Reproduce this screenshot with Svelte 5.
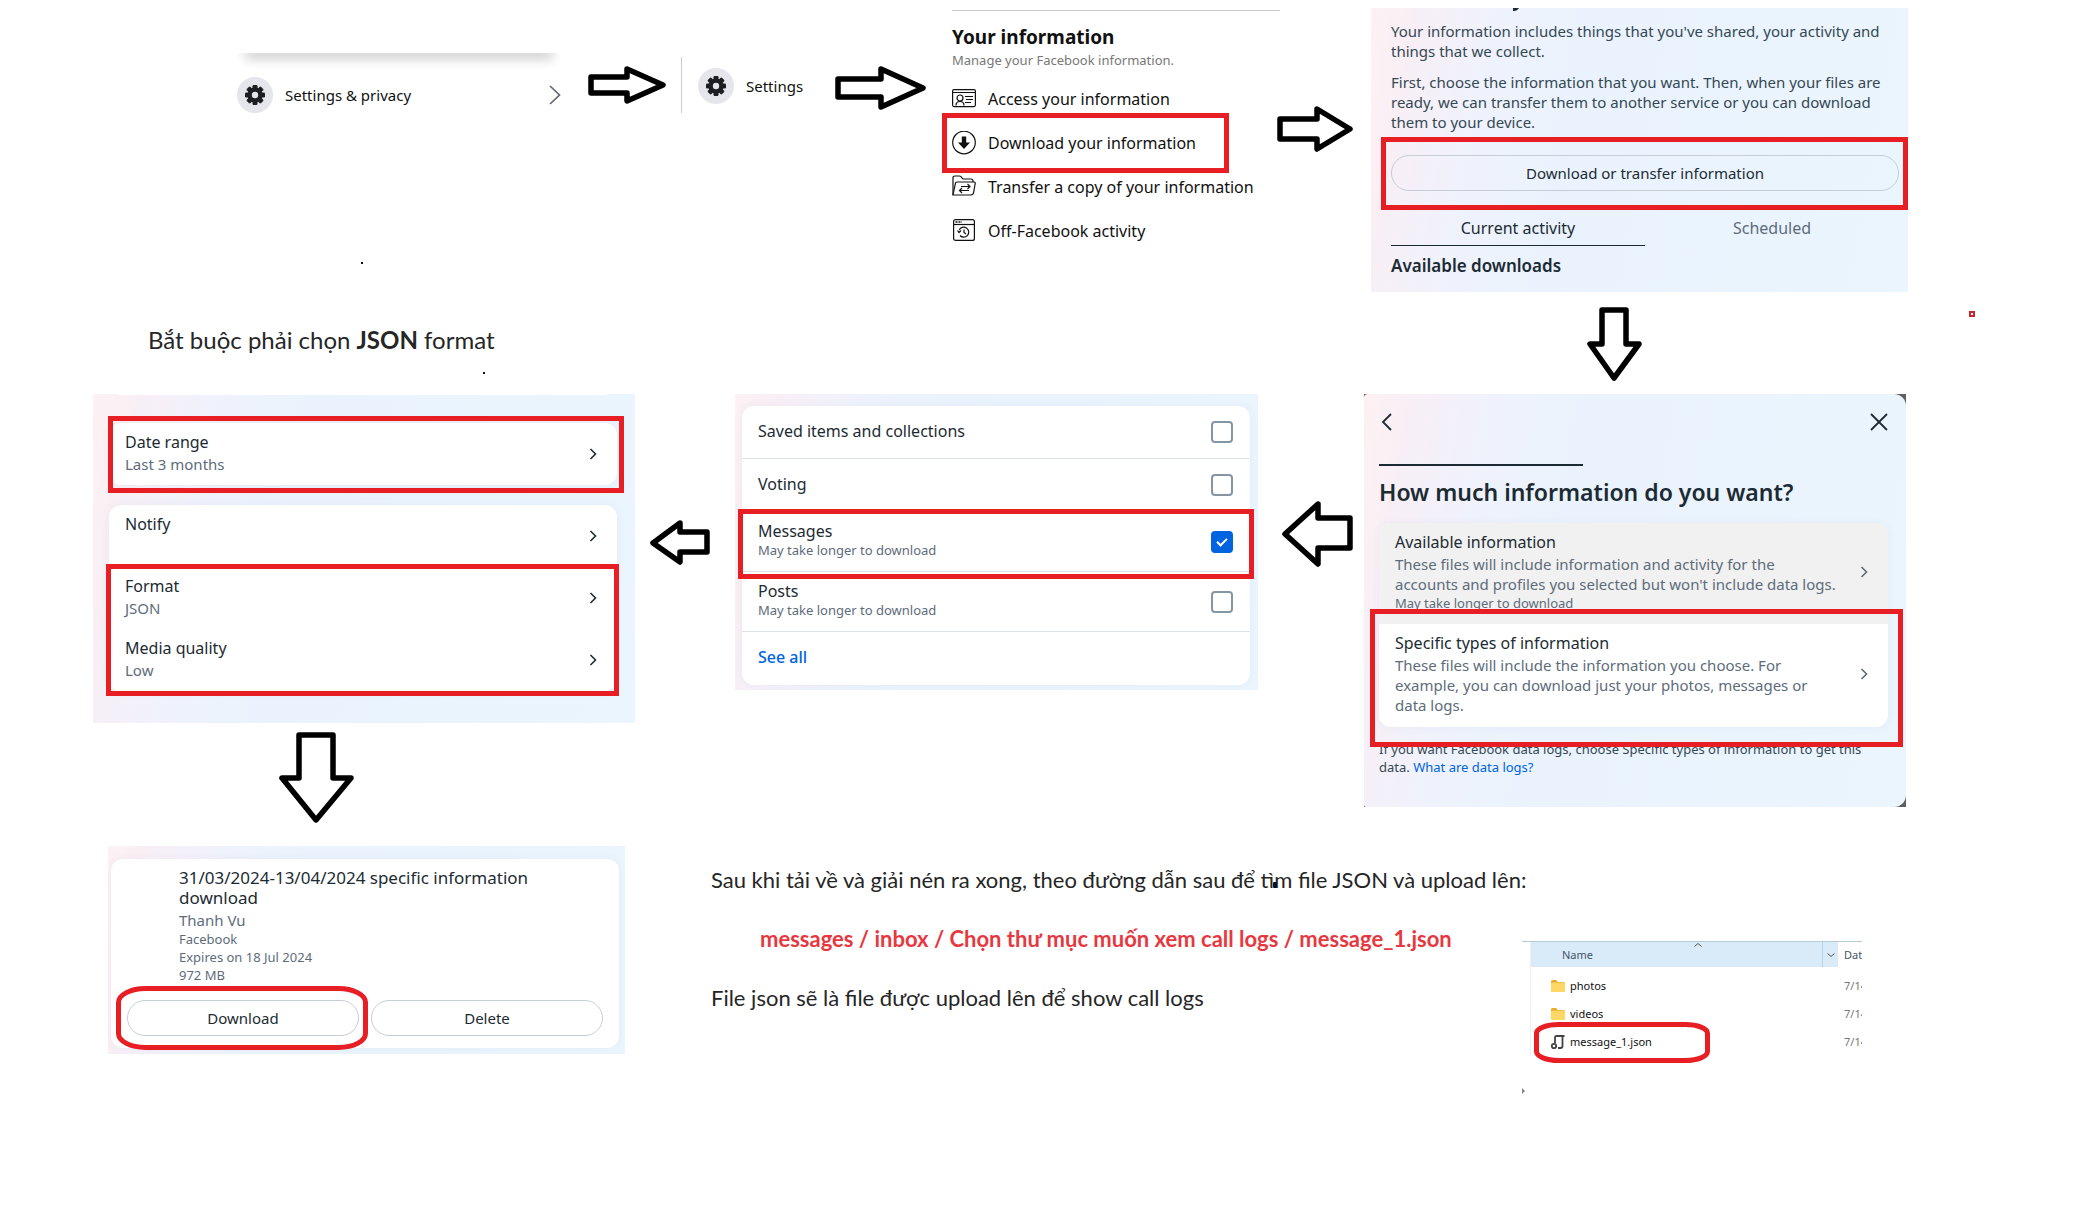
<script>
  const arrows = [
    'M591 77H627V69L663 85L627 101V93H591Z',
    'M838 79H881V69L923 88L881 107V97H838Z',
    'M1280 119H1317V109L1350 129L1317 149V139H1280Z',
    'M1602 310H1626V344H1639L1614 378L1590 344H1602Z',
    'M1350 518H1318V504L1285 534L1318 564V548H1350Z',
    'M707 532H680V523L653 543L680 562V552H707Z',
    'M299 735H333V778H351L316 820L282 778H299Z'
  ];

  const marks = [
    { x: 944, y: 115, w: 282, h: 55 },
    { x: 1383, y: 139, w: 522, h: 68 },
    { x: 110, y: 418, w: 511, h: 72 },
    { x: 108, y: 566, w: 508, h: 127 },
    { x: 740, y: 511, w: 511, h: 65 },
    { x: 1372, y: 611, w: 528, h: 133 }
  ];

  const settings = [
    { title: 'Notify', value: '' },
    { title: 'Format', value: 'JSON' },
    { title: 'Media quality', value: 'Low' }
  ];

  let types = $state([
    { id: 'saved', title: 'Saved items and collections', note: '', on: false },
    { id: 'voting', title: 'Voting', note: '', on: false },
    { id: 'messages', title: 'Messages', note: 'May take longer to download', on: true },
    { id: 'posts', title: 'Posts', note: 'May take longer to download', on: false }
  ]);

  const files = [
    { name: 'photos', folder: true },
    { name: 'videos', folder: true },
    { name: 'message_1.json', folder: false }
  ];
</script>

{#snippet gear()}
  <svg class="gear" viewBox="0 0 36 36" aria-hidden="true">
    <circle cx="18" cy="18" r="18" fill="#e4e6eb" />
    <g fill="#1c1e21">
      {#each [0, 45, 90, 135] as a}
        <rect x="15.500" y="8" width="5" height="20" rx="1.200" transform="rotate({a} 18 18)" />
      {/each}
      <circle cx="18" cy="18" r="7.500" />
    </g>
    <circle cx="18" cy="18" r="3.200" fill="#e4e6eb" />
  </svg>
{/snippet}

{#snippet chevron()}
  <svg class="chevron" viewBox="0 0 8 12" aria-hidden="true">
    <path d="M1.5 1L6.500 6L1.500 11" fill="none" stroke="currentColor" stroke-width="1.600" />
  </svg>
{/snippet}

<main class="board">
  <section class="node step-privacy">
    <div class="edge"></div>
    <button class="menu">
      {@render gear()}
      <span>Settings &amp; privacy</span>
      <svg class="big-chevron" viewBox="0 0 12 20" aria-hidden="true">
        <path d="M1 1L10.500 10L1 19" fill="none" stroke="#606770" stroke-width="1.700" />
      </svg>
    </button>
  </section>

  <section class="node step-settings">
    <button class="menu">
      {@render gear()}
      <span>Settings</span>
    </button>
  </section>

  <section class="node step-info">
    <h2>Your information</h2>
    <p>Manage your Facebook information.</p>
    <ul>
      <li>
        <a href="#access">
          <svg viewBox="0 0 24 24" aria-hidden="true">
            <g fill="none" stroke="#111" stroke-width="1.200">
              <rect x="0.600" y="2.600" width="22.800" height="17" rx="1.500" />
              <path d="M1 5.500H23M13 9.500H21M14 12.500H21M13 15.500H19M4 18.500C4 15.500 6 14.500 8 14.500S12 15.500 12 18.500" />
              <circle cx="8" cy="11" r="3" />
            </g>
          </svg>
          Access your information
        </a>
      </li>
      <li>
        <a href="#download">
          <svg viewBox="0 0 24 24" aria-hidden="true">
            <circle cx="12" cy="11.500" r="11.300" fill="none" stroke="#111" stroke-width="1.200" />
            <path d="M9.800 5.500H14.200V11.500H18L12 18L6 11.500H9.800Z" fill="#111" />
          </svg>
          Download your information
        </a>
      </li>
      <li>
        <a href="#transfer">
          <svg viewBox="0 0 24 24" aria-hidden="true">
            <g fill="none" stroke="#111" stroke-width="1.200">
              <path d="M1 20V3Q1 1 3 1H7.500Q9 1 10 3L11 4H19Q21 4 21 6V7" />
              <path d="M1 20L3.500 8Q4 7 5 7H22Q23.500 7 23.200 8.500L21.500 18Q21 20 19 20Z" />
              <path d="M9 11.500H18M15.500 9L18 11.500L15.500 14M17 15.500H7.500M10 13L7.500 15.500L10 18" />
            </g>
          </svg>
          Transfer a copy of your information
        </a>
      </li>
      <li>
        <a href="#activity">
          <svg viewBox="0 0 24 24" aria-hidden="true">
            <g fill="none" stroke="#111" stroke-width="1.200">
              <rect x="1.600" y="0.600" width="20.800" height="20.800" rx="2" />
              <path d="M2 5.500H22" />
              <path d="M3.500 3H10" stroke-dasharray="2 1" stroke-width="1.500" />
              <path d="M7.200 11A5 5 0 1 1 8 16.500M5.500 11.500L7 13.500L9 11.500M12 10.500V13.500L14 15" />
            </g>
          </svg>
          Off-Facebook activity
        </a>
      </li>
    </ul>
  </section>

  <section class="node panel step-transfer">
    <svg class="tail" viewBox="0 0 8 4" aria-hidden="true"><path d="M1 0H7Q5 3.500 1 3Z" fill="#1c2b33" /></svg>
    <p>Your information includes things that you've shared, your activity and<br />things that we collect.</p>
    <p>First, choose the information that you want. Then, when your files are<br />ready, we can transfer them to another service or you can download<br />them to your device.</p>
    <button class="pill">Download or transfer information</button>
    <div class="tabs" role="tablist">
      <button role="tab" aria-selected="true">Current activity</button>
      <button role="tab" aria-selected="false">Scheduled</button>
    </div>
    <h3>Available downloads</h3>
  </section>

  <p class="node note heading">Bắt buộc phải chọn <b>JSON</b> format</p>

  <section class="node panel step-format">
    <div class="sliver"></div>
    <div class="card">
      <button class="row">
        <span><strong>Date range</strong><small>Last 3 months</small></span>
        {@render chevron()}
      </button>
    </div>
    <div class="card">
      {#each settings as s}
        <button class="row">
          <span><strong>{s.title}</strong><small>{s.value}</small></span>
          {@render chevron()}
        </button>
      {/each}
    </div>
  </section>

  <section class="node panel step-types">
    <div class="card">
      {#each types as t}
        <label class="choice" class:tall={t.note} for={t.id}>
          <span><strong>{t.title}</strong>{#if t.note}<small>{t.note}</small>{/if}</span>
          <input type="checkbox" id={t.id} bind:checked={t.on} />
        </label>
      {/each}
      <a class="choice" href="#all"><span>See all</span></a>
    </div>
  </section>

  <div class="node backing">
    <section class="panel step-amount">
      <header>
        <button aria-label="Back">
          <svg viewBox="0 0 18 18" aria-hidden="true"><path d="M12 1L4 9L12 17" /></svg>
        </button>
        <button aria-label="Close">
          <svg viewBox="0 0 18 18" aria-hidden="true"><path d="M1 1L17 17M17 1L1 17" /></svg>
        </button>
      </header>
      <div class="progress"></div>
      <h2>How much information do you want?</h2>
      <div class="card">
        <button class="option hovered">
          <span>
            <strong>Available information</strong>
            <span class="body">These files will include information and activity for the<br />accounts and profiles you selected but won't include data logs.</span>
            <small>May take longer to download</small>
          </span>
          {@render chevron()}
        </button>
        <button class="option">
          <span>
            <strong>Specific types of information</strong>
            <span class="body">These files will include the information you choose. For<br />example, you can download just your photos, messages or<br />data logs.</span>
          </span>
          {@render chevron()}
        </button>
      </div>
      <p>If you want Facebook data logs, choose Specific types of information to get this<br />data. <a href="#logs">What are data logs?</a></p>
    </section>
  </div>

  <section class="node panel step-ready">
    <div class="card">
      <div class="details">
        <strong>31/03/2024-13/04/2024 specific information<br />download</strong>
        <span class="body">Thanh Vu</span>
        <small>Facebook</small>
        <small>Expires on 18 Jul 2024</small>
        <small>972 MB</small>
      </div>
      <div class="actions">
        <button class="pill">Download</button>
        <button class="pill">Delete</button>
      </div>
    </div>
  </section>

  <section class="node note guide">
    <p>Sau khi tải về và giải nén ra xong, theo đường dẫn sau để tìm file JSON và upload lên:</p>
    <p class="path">messages / inbox / Chọn thư mục muốn xem call logs / message_1.json</p>
    <p>File json sẽ là file được upload lên để show call logs</p>
  </section>

  <section class="node explorer">
    <table>
      <thead>
        <tr>
          <th>Name
            <svg class="sort" viewBox="0 0 8 4" aria-hidden="true"><path d="M0.500 3.500L4 0.500L7.500 3.500" /></svg>
          </th>
          <th class="drop"><svg viewBox="0 0 8 4" aria-hidden="true"><path d="M0.500 0.500L4 3.500L7.500 0.500" /></svg></th>
          <th class="date">Dat</th>
        </tr>
      </thead>
      <tbody>
        {#each files as f}
          <tr>
            <td colspan="2">
              <div class="file">
                {#if f.folder}
                  <svg viewBox="0 0 16 16" aria-hidden="true">
                    <path d="M1 3.500Q1 2 2.500 2H6L8 4H14Q15 4 15 5V13H1Z" fill="#e8ab2c" />
                    <rect x="1" y="4.500" width="14" height="9.500" rx="1" fill="#ffd766" />
                  </svg>
                {:else}
                  <svg viewBox="0 0 16 16" aria-hidden="true">
                    <g fill="none" stroke="#444" stroke-width="1.800">
                      <path d="M5 9V3.500Q5 2 6.500 2H14.500M12.500 2V12Q12.500 14 10.500 14H8" />
                      <circle cx="4" cy="12" r="2.200" />
                    </g>
                  </svg>
                {/if}
                {f.name}
              </div>
            </td>
            <td class="date">7/14</td>
          </tr>
        {/each}
      </tbody>
    </table>
  </section>

  <svg class="ink" viewBox="0 0 2075 1209" aria-hidden="true">
    <g fill="#fff" stroke="#000" stroke-width="5.500" stroke-linejoin="round">
      {#each arrows as d}<path {d} />{/each}
    </g>
    <g fill="none" stroke="#e81e25" stroke-width="5" transform="translate(0.5 0.5)">
      {#each marks as m}<rect x={m.x} y={m.y} width={m.w} height={m.h} />{/each}
      <rect x="118" y="988" width="247" height="59" rx="27" ry="14" />
      <rect x="1536" y="1024" width="171" height="36" rx="22" ry="9" />
    </g>
    <rect x="1970" y="312" width="4" height="4" fill="#fff" stroke="#c9252f" stroke-width="2" />
    <g fill="#111">
      <rect x="361" y="262" width="2" height="2" />
      <rect x="483" y="372" width="2" height="2" />
      <rect x="1273" y="882" width="4" height="6" rx="1" />
    </g>
    <path d="M1522 1088L1525 1091L1522 1094Z" fill="#888" />
  </svg>
</main>

<style>
  :global(body) { margin: 0; background: #fff; }
  .board {
    position: relative;
    min-height: 1209px;
    overflow: hidden;
    font-family: "Noto Sans", "Open Sans", sans-serif;
    font-size: 15px;
    line-height: 20px;
    color: #1c2b33;
    white-space: nowrap;
  }
  .board :is(h2, h3, p, ul) { margin: 0; padding: 0; }
  button {
    padding: 0;
    border: 0;
    background: none;
    font: inherit;
    color: inherit;
    text-align: left;
  }
  a { color: #0064e0; text-decoration: none; }
  svg { display: block; flex: none; }
  strong, small, .body { display: block; font-weight: 400; }
  strong { font-size: 16px; }
  small { font-size: 13px; line-height: 18px; color: #5d6c7b; }
  .body { color: #5d6c7b; }
  .node { position: absolute; }
  .ink { position: absolute; top: 0; left: 0; width: 2075px; height: 1209px; pointer-events: none; }

  .panel {
    box-sizing: border-box;
    background: linear-gradient(100deg, #fdf1f2 0%, #f8eff6 8%, #f0f2fc 20%, #eaf3fd 36%, #ebf5fe 100%);
  }
  .card {
    border-radius: 12px;
    background: #fff;
    box-shadow: 0 0 10px rgba(60, 90, 130, 0.06);
    overflow: hidden;
  }
  .chevron { width: 8px; height: 12px; }
  .pill {
    display: block;
    box-sizing: border-box;
    width: 100%;
    height: 36px;
    border: 1px solid #c6cdd5;
    border-radius: 18px;
    text-align: center;
  }

  .menu { display: flex; align-items: center; width: 100%; gap: 12px; font-size: 15px; color: #111; }
  .gear { width: 36px; height: 36px; }
  .big-chevron { width: 12px; height: 20px; margin-left: auto; }
  .step-privacy { left: 237px; top: 53px; width: 324px; }
  .edge { height: 16px; margin-bottom: 8px; overflow: hidden; }
  .edge::before { content: ""; display: block; height: 0; margin: 0 12px; box-shadow: 0 1px 12px 4px rgba(0, 0, 0, 0.26); }
  .step-settings { left: 681px; top: 57px; padding: 11px 0 9px 16px; border-left: 1px solid #ccc; }

  .step-info { left: 952px; top: 10px; width: 328px; border-top: 1px solid #ccc; color: #111; }
  .step-info h2 { margin-top: 13px; font-size: 19px; line-height: 26px; font-weight: 700; }
  .step-info p { font-size: 13px; line-height: 20px; color: #777; }
  .step-info ul { list-style: none; margin-top: 7px; }
  .step-info a { display: flex; align-items: center; gap: 12px; height: 44px; font-size: 16px; color: #111; }
  .step-info a svg { width: 24px; height: 24px; }

  .step-transfer { left: 1371px; top: 8px; width: 537px; padding: 0 9px 16px 20px; }
  .tail { width: 8px; height: 4px; margin: 0 0 9px 121px; }
  .step-transfer p { margin-bottom: 11px; color: #344854; }
  .step-transfer .pill { margin: 23px 0 20px; }
  .tabs { display: flex; }
  .tabs button { flex: 1; height: 35px; text-align: center; font-size: 16px; color: #5d6c7b; border-bottom: 1px solid transparent; }
  .tabs button[aria-selected="true"] { color: #1c2b33; border-color: #1c2b33; }
  .step-transfer h3 { margin-top: 10px; font-size: 17px; line-height: 20px; font-weight: 600; }

  .note { font-family: Lato, "Open Sans", sans-serif; font-size: 22px; line-height: 30px; color: #262626; }
  .heading { left: 148px; top: 325px; margin: 0; font-size: 24px; }
  .guide { left: 711px; top: 865px; display: flex; flex-direction: column; gap: 29px; }
  .guide .path { padding-left: 49px; font-weight: 700; color: #e8383f; }

  .step-format { left: 93px; top: 394px; width: 542px; padding: 0 18px 32px 16px; }
  .sliver { height: 1px; margin: 0 10px 28px; background: #fff; }
  .step-format .card + .card { margin-top: 20px; }
  .row { display: flex; align-items: center; justify-content: space-between; width: 100%; height: 62px; padding: 0 20px 0 16px; }
  .row span { display: grid; grid-template-rows: 20px 20px; gap: 2px; padding-bottom: 3px; }
  .row small { font-size: 15px; line-height: 20px; }

  .step-types { left: 735px; top: 394px; width: 523px; padding: 12px 8px 5px 7px; }
  .choice { box-sizing: border-box; display: flex; align-items: center; justify-content: space-between; height: 53px; padding: 0 17px 0 16px; border-bottom: 1px solid #dee3e9; }
  .choice span { padding-bottom: 3px; }
  a.choice { font-size: 16px; font-weight: 500; }
  .tall { height: 60px; }
  .choice:last-child { border: 0; }
  .choice input { position: relative; appearance: none; box-sizing: border-box; width: 22px; height: 22px; margin: 0; border: 2px solid #8595a4; border-radius: 4px; background: #fff; }
  .choice input:checked { border-color: #0064e0; background: #0064e0; }
  .choice input:checked::after { content: ""; position: absolute; left: 6px; top: 3px; width: 4px; height: 8px; border: solid #fff; border-width: 0 2px 2px 0; transform: rotate(45deg); }

  .backing { left: 1364px; top: 394px; width: 542px; background: #5c5e60; }
  .step-amount { border-radius: 4px 12px 12px 2px; padding: 19px 18px 31px 15px; }
  .step-amount header { display: flex; justify-content: space-between; }
  .step-amount header svg { width: 18px; height: 18px; fill: none; stroke: #1c2b33; stroke-width: 1.8px; }
  .progress { width: 40%; height: 2px; margin-top: 33px; background: #1c2b33; }
  .step-amount h2 { margin: 11px 0 16px; font-size: 23px; line-height: 30px; font-weight: 600; }
  .option { display: flex; align-items: center; justify-content: space-between; width: 100%; padding: 9px 20px 12px 16px; }
  .option strong { margin-bottom: 2px; }
  .option .chevron { color: #5d6c7b; }
  .hovered { background: #f1f1f1; }
  .step-amount p { margin-top: 13px; font-size: 13px; line-height: 18px; color: #344854; }

  .step-ready { left: 108px; top: 846px; width: 517px; padding: 13px 6px 6px 3px; }
  .step-ready .card { padding: 9px 16px 12px; }
  .step-ready strong { font-size: 17px; }
  .details { padding-left: 52px; }
  .details .body { margin-top: 2px; }
  .actions { display: flex; gap: 12px; margin-top: 16px; }

  .explorer { left: 1522px; top: 941px; width: 340px; padding-bottom: 54px; overflow: hidden; border-top: 1px solid #b4cdda; font-size: 11px; line-height: 16px; color: #111; }
  table { width: 332px; margin-left: 8px; border-left: 1px solid #f0f0f0; border-spacing: 0; table-layout: fixed; }
  th, td { box-sizing: border-box; padding: 0; font-weight: 400; text-align: left; }
  th { height: 25px; background: #d9ebf9; color: #44546a; padding-left: 31px; }
  th svg { width: 8px; height: 4px; fill: none; stroke: #555; }
  thead tr { position: relative; }
  .sort { position: absolute; left: 163px; top: 1px; }
  th.drop { width: 16px; padding-left: 4px; border-left: 1px solid #b9d3e6; }
  .date { width: 24px; padding-left: 6px; color: #777; }
  th.date { padding-left: 6px; background: none; color: #44546a; }
  td { height: 28px; }
  tbody tr:first-child td { height: 33px; padding-top: 5px; }
  .file { display: flex; align-items: center; gap: 4px; padding-left: 19px; }
  .file svg { width: 16px; height: 16px; }
</style>
